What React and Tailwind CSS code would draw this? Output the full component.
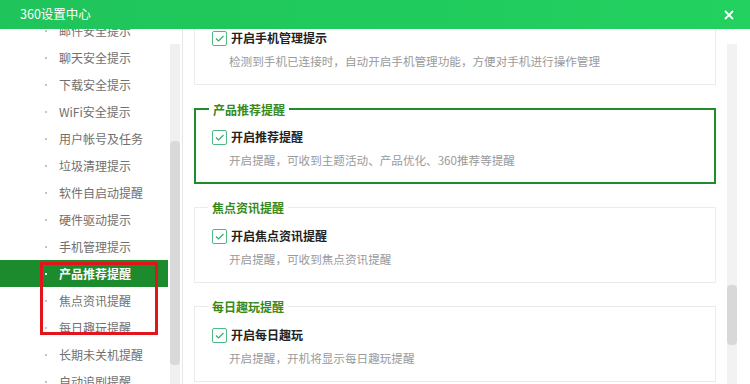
import React from 'react';

const navItems = [
  '邮件安全提示',
  '聊天安全提示',
  '下载安全提示',
  'WiFi安全提示',
  '用户帐号及任务',
  '垃圾清理提示',
  '软件自启动提醒',
  '硬件驱动提示',
  '手机管理提示',
  '产品推荐提醒',
  '焦点资讯提醒',
  '每日趣玩提醒',
  '长期未关机提醒',
  '自动追剧提醒',
];

const sections = [
  {
    title: '手机管理提示',
    label: '开启手机管理提示',
    desc: '检测到手机已连接时，自动开启手机管理功能，方便对手机进行操作管理',
  },
  {
    title: '产品推荐提醒',
    label: '开启推荐提醒',
    desc: '开启提醒，可收到主题活动、产品优化、360推荐等提醒',
    active: true,
  },
  {
    title: '焦点资讯提醒',
    label: '开启焦点资讯提醒',
    desc: '开启提醒，可收到焦点资讯提醒',
  },
  {
    title: '每日趣玩提醒',
    label: '开启每日趣玩',
    desc: '开启提醒，开机将显示每日趣玩提醒',
  },
];

export default function App() {
  return (
    <div className="w-[750px] h-[384px] overflow-hidden bg-white flex flex-col font-['Noto_Sans_CJK_SC',sans-serif] text-[12px]">
      <div className="h-[29px] shrink-0 flex items-center justify-between bg-gradient-to-r from-[#1fc45a] to-[#22d160] text-white">
        <span className="pl-[20px] text-[12.5px] leading-none">360设置中心</span>
        <svg width="10" height="10" viewBox="0 0 10 10" className="mr-[16px]">
          <path d="M1 1 L9 9 M9 1 L1 9" stroke="white" strokeWidth="1.8" />
        </svg>
      </div>

      <div className="flex flex-1 min-h-0 overflow-hidden">
        <Sidebar />
        <div className="flex-1 flex pl-[11px]">
          <div className="w-[522px] flex flex-col gap-[23px] -mt-[20px]">
            {sections.map((s) => (
              <Section key={s.title} {...s} />
            ))}
          </div>
          <div className="ml-[11px] mt-[15px] w-[10px] bg-[#f2f2f2]">
            <div className="mt-[241px] h-[60px] rounded-[4px] bg-[#d8d8d8]" />
          </div>
        </div>
      </div>
    </div>
  );
}

function Sidebar() {
  return (
    <div className="relative w-[183px] shrink-0 flex border-r border-[#e6e6e6]">
      <ul className="w-[168px] -mt-[12px]">
        {navItems.map((item) => {
          const active = item === '产品推荐提醒';
          return (
            <li
              key={item}
              className={
                active
                  ? 'h-[27px] shrink-0 flex items-center bg-[#1b8b2e] text-white font-bold'
                  : 'h-[27px] shrink-0 flex items-center text-[#707070]'
              }
            >
              <span
                className={
                  active
                    ? 'ml-[45px] mr-[12px] w-[2px] h-[2px] bg-white'
                    : 'ml-[45px] mr-[12px] w-[2px] h-[2px] bg-[#c4c4c4]'
                }
              />
              {item}
            </li>
          );
        })}
      </ul>
      <div className="ml-[2px] mt-[15px] w-[10px] bg-[#f0f0f0]">
        <div className="mt-[97px] h-[224px] rounded-[4px] bg-[#d9d9d9]" />
      </div>
      <div className="absolute left-[40px] top-[233px] w-[118px] h-[73px] border-[3px] border-[#e3141c]" />
    </div>
  );
}

function Section({ title, label, desc, active }) {
  return (
    <div
      className={
        active
          ? 'relative h-[76px] shrink-0 border-2 border-[#1f8c2e] pt-[19px] pl-[16px]'
          : 'relative h-[76px] shrink-0 border border-[#ebebeb] pt-[20px] pl-[17px]'
      }
    >
      <span className="absolute left-[13px] top-0 -translate-y-1/2 bg-white px-[4px] leading-[16px] font-bold text-[#368a1c]">
        {title}
      </span>
      <div className="flex items-center h-[16px]">
        <Checkbox />
        <span className="ml-[4px] text-[#222] font-bold leading-[16px]">{label}</span>
      </div>
      <div className="mt-[7px] ml-[17px] leading-[16px] text-[11.6px] text-[#9a9a9a]">{desc}</div>
    </div>
  );
}

function Checkbox() {
  return (
    <span className="w-[15px] h-[15px] shrink-0 flex items-center justify-center border border-[#4fb884] rounded-[2px] bg-white">
      <svg width="11" height="11" viewBox="0 0 11 11">
        <path d="M2 5.5 L4.5 8 L9.5 3" fill="none" stroke="#3aaa6a" strokeWidth="1.2" />
      </svg>
    </span>
  );
}
